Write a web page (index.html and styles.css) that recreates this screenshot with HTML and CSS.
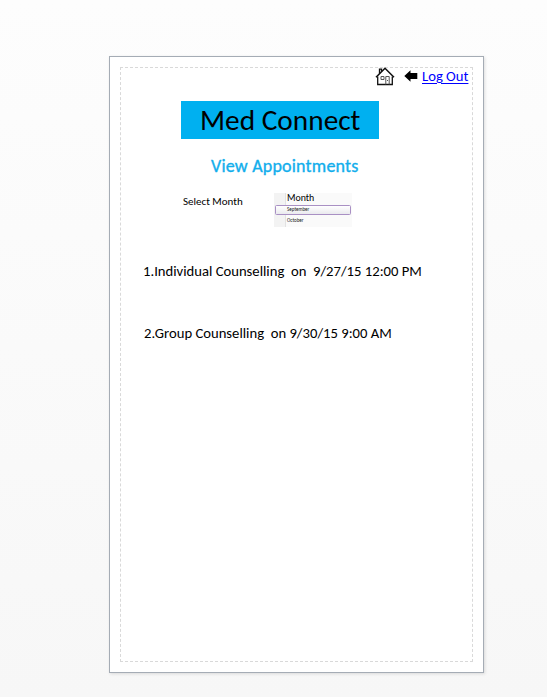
FILE: index.html
```html
<!DOCTYPE html>
<html lang="en">
<head>
<meta charset="utf-8">
<title>Med Connect</title>
<link rel="stylesheet" href="styles.css">
</head>
<body>
<main class="page">
  <div class="content">
    <nav class="toolbar">
      <svg class="home" width="20" height="19" viewBox="0 0 20 19" fill="none" stroke="#111">
        <path d="M1 10.3 10 1.2l9 9.1" stroke-width="1.5"/>
        <path d="M2.7 9.5v8h14.6v-8M4.5 6.5V2.2h2v2.2" stroke-width="1.3"/>
        <path d="M6 9.5h3v3H6zM10.8 17.5v-8h3.4v8M12 13.5h1" stroke="#555" stroke-width="1"/>
      </svg>
      <svg class="back" width="14" height="12" viewBox="0 0 14 12"><path d="M.3 6 6.5.3v2.7h6.8v6h-6.8v2.7z"/></svg>
      <a class="logout" href="#">Log Out</a>
    </nav>
    <h1 class="brand"><span>Med Connect</span></h1>
    <h2 class="heading"><span>View Appointments</span></h2>
    <div class="filter">
      <span class="label">Select Month</span>
      <div class="months">
        <div class="months-title">Month</div>
        <div class="month selected">September</div>
        <div class="month">October</div>
      </div>
    </div>
    <div class="appointment first"><span>1.Individual Counselling&nbsp; on&nbsp; 9/27/15 12:00 PM</span></div>
    <div class="appointment second"><span>2.Group Counselling&nbsp; on 9/30/15 9:00 AM</span></div>
  </div>
</main>
</body>
</html>
```
FILE: styles.css
```css
* { box-sizing: border-box; }
html { height: 100%; }
body {
  margin: 0;
  height: 697px;
  padding: 56px 0 0 109px;
  overflow: hidden;
  background: linear-gradient(#fdfdfd, #f7f7f7);
  font-family: Carlito, Lato, "Liberation Sans", sans-serif;
  color: #000;
}
.page {
  width: 375px;
  height: 617px;
  padding: 10px;
  border: 1px solid #a5acb5;
  background: #fff;
  box-shadow: 1px 1px 3px rgba(0, 0, 0, .12);
}
.content {
  width: 353px;
  height: 595px;
  border: 1px dashed #d9d9d9;
}
.toolbar {
  display: flex;
  height: 33px;
  padding-left: 254px;
}
.home { margin-top: -1px; }
.back { margin: 2px 0 0 9px; }
.logout {
  margin-left: 4px;
  font-size: 14.67px;
  line-height: 16px;
  color: #00f;
  white-space: nowrap;
  text-underline-offset: 2px;
}
.brand {
  width: 198px;
  height: 38px;
  margin: 0 0 0 60px;
  padding-left: 19px;
  background: #00b0f0;
  font-size: 29.33px;
  font-weight: 400;
  line-height: 38px;
  white-space: nowrap;
}
.heading {
  height: 24px;
  margin: 16px 0 0 90px;
  font-size: 18px;
  font-weight: 400;
  letter-spacing: .2px;
  line-height: 22px;
  color: #12aeec;
  -webkit-text-stroke: .35px #12aeec;
  white-space: nowrap;
}
.filter {
  display: flex;
  height: 34px;
  margin: 14px 0 0 62px;
}
.label {
  width: 91px;
  font-size: 11px;
  line-height: 17px;
  white-space: nowrap;
}
.months {
  width: 78px;
  height: 34px;
  background: linear-gradient(90deg, #f3f3f3 11px, #e2e2e2 11px, #e2e2e2 12px, #fafafa 12px);
}
.months-title {
  height: 12px;
  padding-left: 13px;
  font-size: 9.9px;
  line-height: 10px;
}
.month {
  height: 11px;
  padding-left: 13px;
  font-size: 5px;
  line-height: 11px;
  color: #222;
}
.month.selected {
  width: 76px;
  height: 10px;
  margin-left: 1px;
  padding-left: 11px;
  border: 1px solid #a990c4;
  border-radius: 1.5px;
  background: linear-gradient(#fff, #eaeaee);
  line-height: 7px;
}
.appointment {
  height: 18px;
  font-size: 14.67px;
  line-height: 16px;
  white-space: nowrap;
}
.first { margin: 36px 0 0 22px; }
.second { margin: 44px 0 0 23px; }
```
